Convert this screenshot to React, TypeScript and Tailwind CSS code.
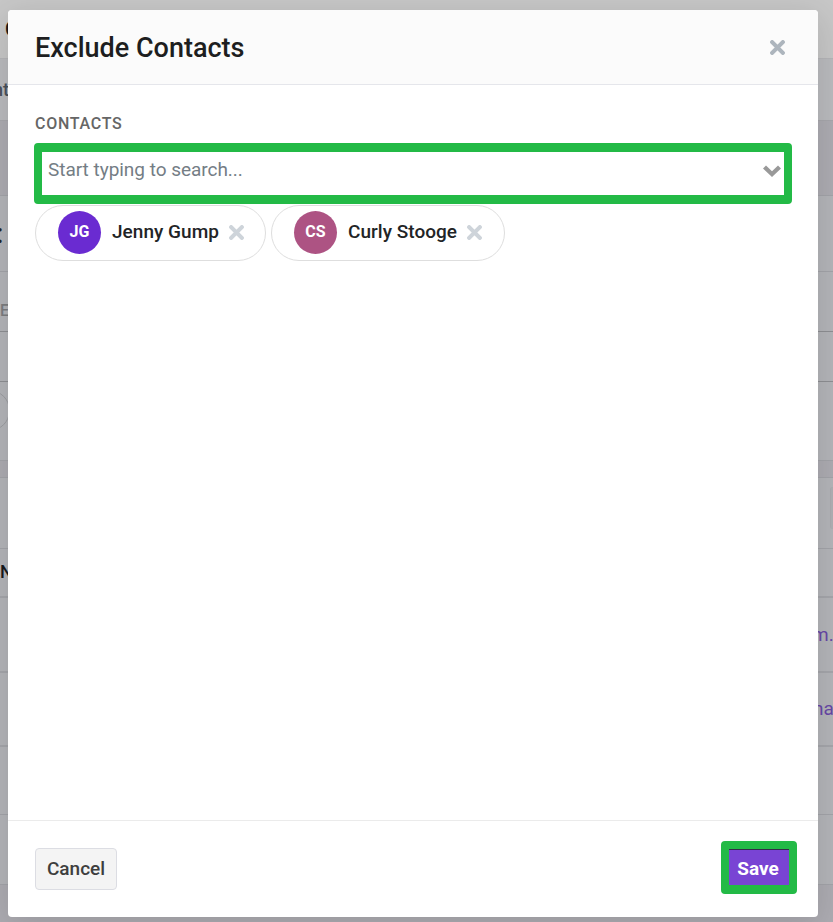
import React from 'react';

function Cross({ className }: { className: string }) {
  return (
    <svg viewBox="0 0 14 14" className={className} fill="none" stroke="currentColor" strokeWidth="3.9">
      <path d="M2 2 12 12M12 2 2 12" strokeLinecap="round" />
    </svg>
  );
}

function Chip({ initials, name, width, color }: { initials: string; name: string; width: string; color: string }) {
  return (
    <div className={`flex h-14 items-center rounded-full border border-[#dedede] pb-[2px] pl-[22px] ${width}`}>
      <span className={`flex size-[43px] shrink-0 items-center justify-center rounded-full text-[16px] font-bold text-white ${color}`}>
        {initials}
      </span>
      <span className="ml-[11px] whitespace-nowrap text-[19px] font-medium tracking-[0.03px] text-[#222426]">{name}</span>
      <Cross className="ml-[10px] size-[15px] shrink-0 text-[#ced4da]" />
    </div>
  );
}

function Backdrop() {
  return (
    <div className="flex h-full flex-col overflow-hidden whitespace-nowrap bg-[#aeadb3]">
      <div className="h-[59px] shrink-0 border-b border-[#b6b6b9] bg-[#c8c8c8] pl-[5px] pt-[14px] text-[20px] font-medium text-[#18191b]">C</div>
      <div className="h-[62px] shrink-0 border-b border-[#a8a8ad] bg-[#bbbcbf] pt-[17px] text-[18px] font-medium text-[#4a525c]">
        <span className="-ml-[7px]">nt</span>
      </div>
      <div className="h-[74px] shrink-0" />
      <div className="h-[77px] shrink-0 border-y border-[#a4a5aa] bg-[#b5b6ba] pt-[17px] text-[28px] font-medium text-[#232427]"><span className="-ml-[4px]">:</span></div>
      <div className="h-[60px] shrink-0 border-b border-[#8f9094] bg-[#b5b6ba] pt-[27px] text-[16px] font-medium text-[#7d7e81]">E</div>
      <div className="h-[50px] shrink-0 border-b border-[#8f9094] bg-[#b5b6ba]" />
      <div className="h-[79px] shrink-0 border-b border-[#a4a5aa] bg-[#b5b6ba] pt-[8px]">
        <div className="-ml-[52px] h-[41px] w-[62px] rounded-full border border-[#9d9ea2]" />
      </div>
      <div className="h-[16px] shrink-0" />
      <div className="flex h-[72px] shrink-0 items-center justify-end border-y border-[#a4a5aa] bg-[#b5b6ba]">
        <div className="-mt-[11px] h-[42px] w-[3px] rounded-l border-l border-[#acadb1] bg-[#b0b1b5]" />
      </div>
      <div className="h-[49px] shrink-0 border-b-2 border-[#a6a7ac] bg-[#b5b6ba] pt-[9px] text-[18px] font-medium text-[#18191b]">N</div>
      <div className="h-[75px] shrink-0 border-b-2 border-[#a6a7ac] bg-[#b5b6ba] pl-[812px] pt-[23px] text-[19px] text-[#6848a8]">m.</div>
      <div className="h-[74px] shrink-0 border-b-2 border-[#a6a7ac] bg-[#b5b6ba] pl-[813px] pt-[22px] text-[19px] text-[#6848a8]">na</div>
      <div className="h-[68px] shrink-0 border-b border-[#a4a5aa] bg-[#b5b6ba]" />
      <div className="h-[70px] shrink-0 border-b border-[#a4a5aa] bg-[#b5b6ba]" />
    </div>
  );
}

function Dialog() {
  return (
    <div className="absolute left-2 top-[10px] flex h-[907px] w-[810px] flex-col rounded-[4px] bg-white shadow-[0_8px_34px_4px_rgba(0,0,0,0.12)]">
      <header className="flex h-[75px] shrink-0 items-center justify-between rounded-t-[4px] border-b border-[#e5e6eb] bg-[#fbfbfb] pl-[27px] pr-[33px]">
        <h1 className="pt-[2px] text-[27px] font-medium text-[#1d1e20]">Exclude Contacts</h1>
        <Cross className="size-[15px] text-[#adb5bd]" />
      </header>
      <main className="flex flex-1 flex-col px-[26px] pt-[29px]">
        <label className="ml-px text-[16px] font-medium leading-[20px] tracking-[0.72px] text-[#666666]">CONTACTS</label>
        <div className="mt-[9px] flex h-[61px] items-center justify-between rounded-[4px] border-8 border-t-9 border-b-9 border-[#23ba46] bg-white pl-[6px] pr-[3px]">
          <span className="-mt-[7px] text-[19px] tracking-[-0.03px] text-[#747d85]">Start typing to search...</span>
          <svg viewBox="0 0 18 12" className="-mt-[6px] h-3 w-[18px]" fill="#999999">
            <path d="M0 3.5 3 .5 9 6.2 15 .5 18 3.5 9 12Z" />
          </svg>
        </div>
        <div className="ml-px mt-px flex gap-[5px]">
          <Chip initials="JG" name="Jenny Gump" width="w-[231px]" color="bg-[#6a2bd1]" />
          <Chip initials="CS" name="Curly Stooge" width="w-[234px]" color="bg-[#ad5383]" />
        </div>
      </main>
      <footer className="flex h-[97px] shrink-0 items-center justify-between border-t border-[#ebebeb] pl-[27px] pr-[21px]">
        <button className="h-[42px] w-[82px] rounded-[4px] border border-[#dcdde3] bg-[#f4f4f4] text-[19px] font-medium text-[#3e3e3e]">Cancel</button>
        <button className="-mt-[3px] h-[53px] w-[76px] rounded-[4px] border-8 border-b-9 border-[#23ba46] bg-[#7944d4] pr-[2px] pt-[4px] text-[19px] font-bold text-white shadow-[inset_0_1px_0_#342a48]">Save</button>
      </footer>
    </div>
  );
}

export default function App() {
  return (
    <div className="relative h-[922px] w-[833px] overflow-hidden font-['Roboto',sans-serif]">
      <Backdrop />
      <Dialog />
    </div>
  );
}
